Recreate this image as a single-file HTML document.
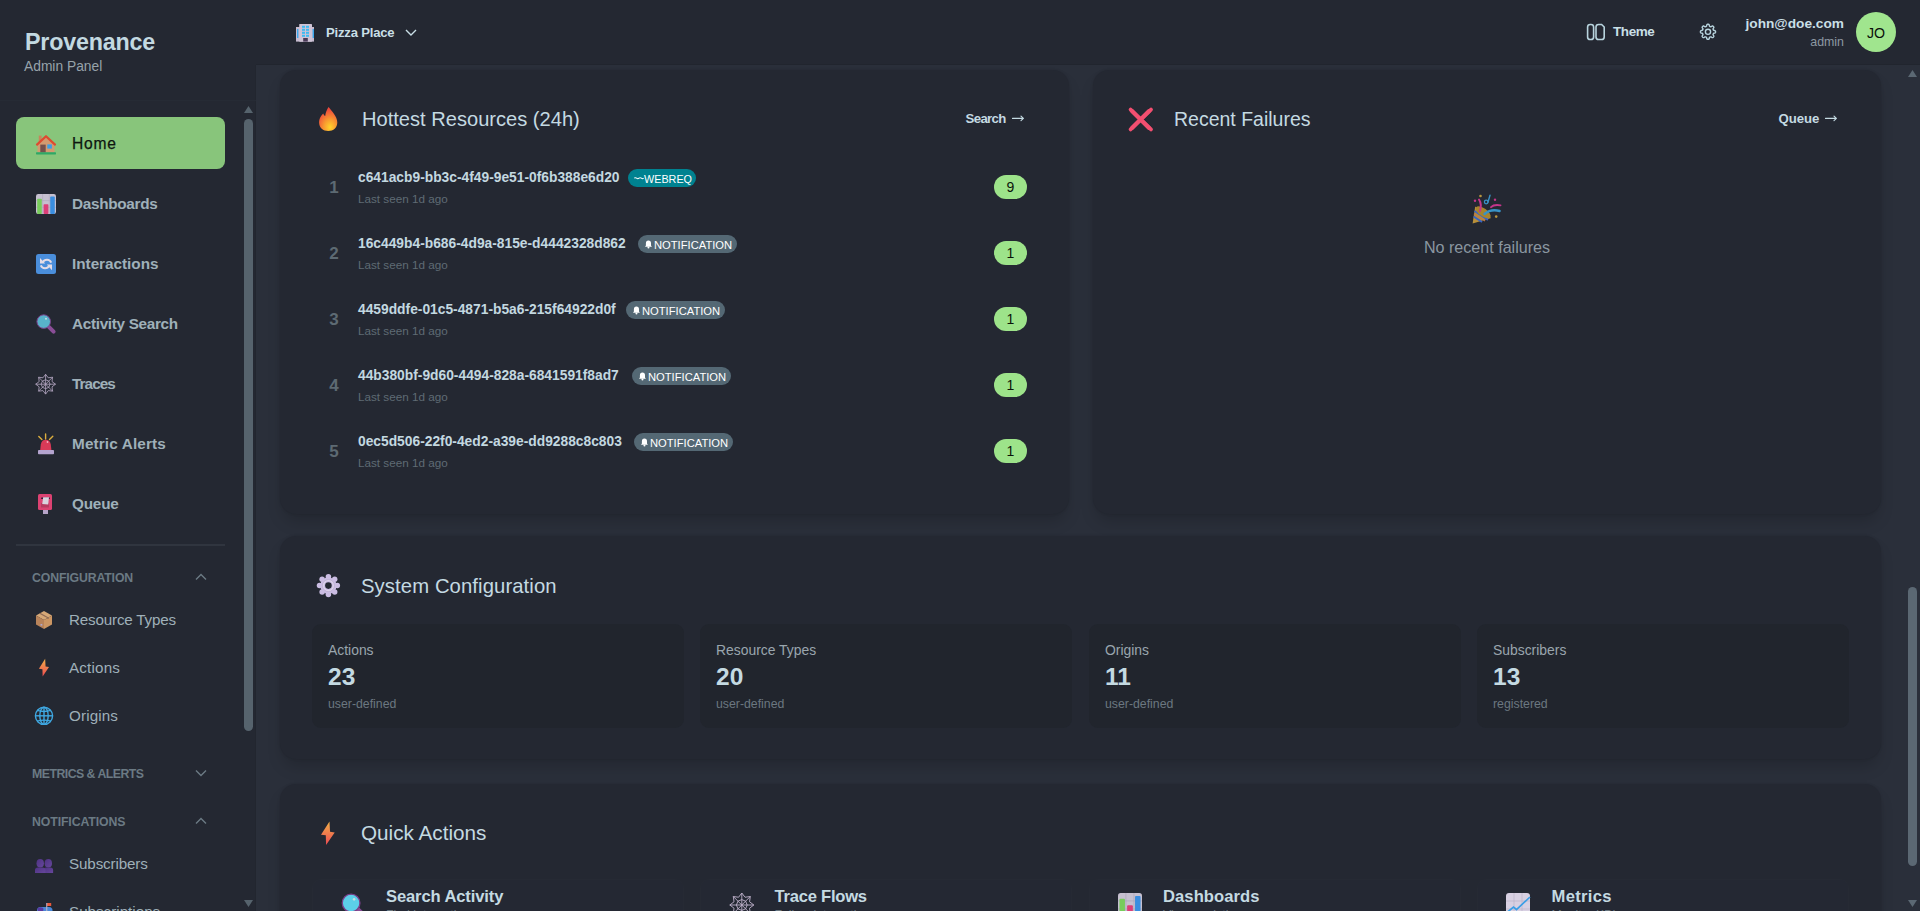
<!DOCTYPE html>
<html><head><meta charset="utf-8"><title>Provenance Admin</title>
<style>
html,body{margin:0;padding:0;}
body{width:1920px;height:911px;overflow:hidden;position:relative;background:#242832;font-family:"Liberation Sans", sans-serif;}
.t{position:absolute;white-space:nowrap;line-height:1;}
</style></head><body>
<div style="position:absolute;left:256px;top:65px;width:1664px;height:846px;background:#2a2f3a;border-radius:0px;"></div>
<div style="position:absolute;left:256px;top:64px;width:1664px;height:1px;background:#21252e;border-radius:0px;"></div>
<div style="position:absolute;left:255px;top:65px;width:1px;height:846px;background:#22262f;border-radius:0px;"></div>
<div style="position:absolute;left:0px;top:100px;width:256px;height:1px;background:#262b35;border-radius:0px;"></div>
<div style="position:absolute;left:280px;top:70px;width:789px;height:444px;background:#242832;border-radius:16px;box-shadow:0 10px 16px -3px rgba(0,0,0,0.17), 0 0 3px rgba(0,0,0,0.12);"></div>
<div style="position:absolute;left:1093px;top:70px;width:788px;height:444px;background:#242832;border-radius:16px;box-shadow:0 10px 16px -3px rgba(0,0,0,0.17), 0 0 3px rgba(0,0,0,0.12);"></div>
<div style="position:absolute;left:280px;top:536px;width:1601px;height:223px;background:#242832;border-radius:16px;box-shadow:0 10px 16px -3px rgba(0,0,0,0.17), 0 0 3px rgba(0,0,0,0.12);"></div>
<div style="position:absolute;left:280px;top:784px;width:1601px;height:200px;background:#242832;border-radius:16px;box-shadow:0 10px 16px -3px rgba(0,0,0,0.17), 0 0 3px rgba(0,0,0,0.12);"></div>
<div style="position:absolute;left:312px;top:624px;width:372px;height:104px;background:#21252d;border-radius:9px;"></div>
<div class="t" style="left:328px;top:643.63px;font-size:13.9px;color:#9aa6ae;">Actions</div>
<div class="t" style="left:328px;top:665.26px;font-size:24.5px;color:#c4dae2;font-weight:bold;">23</div>
<div class="t" style="left:328px;top:698.29px;font-size:12.3px;color:#6b7780;">user-defined</div>
<div style="position:absolute;left:700px;top:624px;width:372px;height:104px;background:#21252d;border-radius:9px;"></div>
<div class="t" style="left:716px;top:643.63px;font-size:13.9px;color:#9aa6ae;">Resource Types</div>
<div class="t" style="left:716px;top:665.26px;font-size:24.5px;color:#c4dae2;font-weight:bold;">20</div>
<div class="t" style="left:716px;top:698.29px;font-size:12.3px;color:#6b7780;">user-defined</div>
<div style="position:absolute;left:1089px;top:624px;width:372px;height:104px;background:#21252d;border-radius:9px;"></div>
<div class="t" style="left:1105px;top:643.63px;font-size:13.9px;color:#9aa6ae;">Origins</div>
<div class="t" style="left:1105px;top:665.26px;font-size:24.5px;color:#c4dae2;font-weight:bold;">11</div>
<div class="t" style="left:1105px;top:698.29px;font-size:12.3px;color:#6b7780;">user-defined</div>
<div style="position:absolute;left:1477px;top:624px;width:372px;height:104px;background:#21252d;border-radius:9px;"></div>
<div class="t" style="left:1493px;top:643.63px;font-size:13.9px;color:#9aa6ae;">Subscribers</div>
<div class="t" style="left:1493px;top:665.26px;font-size:24.5px;color:#c4dae2;font-weight:bold;">13</div>
<div class="t" style="left:1493px;top:698.29px;font-size:12.3px;color:#6b7780;">registered</div>
<div class="t" style="left:25px;top:31.28px;font-size:23.3px;color:#c3d9e1;font-weight:bold;letter-spacing:-0.203px;">Provenance</div>
<div class="t" style="left:24px;top:60.32px;font-size:13.8px;color:#97a3ab;">Admin Panel</div>
<div style="position:absolute;left:16px;top:117px;width:209px;height:52px;background:#88c57b;border-radius:8px;"></div>
<div class="t" style="left:72px;top:135.79px;font-size:15.6px;color:#0e1610;letter-spacing:0.792px;-webkit-text-stroke:0.25px #0e1610;">Home</div>
<div class="t" style="left:72px;top:196.05px;font-size:15.3px;color:#9fb0b9;font-weight:bold;letter-spacing:-0.289px;">Dashboards</div>
<div class="t" style="left:72px;top:256.05px;font-size:15.3px;color:#9fb0b9;font-weight:bold;letter-spacing:-0.018px;">Interactions</div>
<div class="t" style="left:72px;top:316.05px;font-size:15.3px;color:#9fb0b9;font-weight:bold;letter-spacing:-0.313px;">Activity Search</div>
<div class="t" style="left:72px;top:376.05px;font-size:15.3px;color:#9fb0b9;font-weight:bold;letter-spacing:-0.935px;">Traces</div>
<div class="t" style="left:72px;top:436.05px;font-size:15.3px;color:#9fb0b9;font-weight:bold;letter-spacing:0.137px;">Metric Alerts</div>
<div class="t" style="left:72px;top:496.05px;font-size:15.3px;color:#9fb0b9;font-weight:bold;letter-spacing:-0.198px;">Queue</div>
<div style="position:absolute;left:16px;top:544px;width:209px;height:2px;background:#30353f;border-radius:0px;"></div>
<div class="t" style="left:32px;top:571.59px;font-size:12.3px;color:#6b7a84;font-weight:bold;letter-spacing:-0.145px;">CONFIGURATION</div>
<svg style="position:absolute;left:195px;top:573px" width="12" height="8" viewBox="0 0 12 8"><path d="M1 6.5 L6 1.5 L11 6.5" stroke="#6b7a84" stroke-width="1.4" fill="none"/></svg>
<div class="t" style="left:32px;top:767.59px;font-size:12.3px;color:#6b7a84;font-weight:bold;letter-spacing:-0.516px;">METRICS &amp; ALERTS</div>
<svg style="position:absolute;left:195px;top:769px" width="12" height="8" viewBox="0 0 12 8"><path d="M1 1.5 L6 6.5 L11 1.5" stroke="#6b7a84" stroke-width="1.4" fill="none"/></svg>
<div class="t" style="left:32px;top:815.59px;font-size:12.3px;color:#6b7a84;font-weight:bold;letter-spacing:-0.102px;">NOTIFICATIONS</div>
<svg style="position:absolute;left:195px;top:817px" width="12" height="8" viewBox="0 0 12 8"><path d="M1 6.5 L6 1.5 L11 6.5" stroke="#6b7a84" stroke-width="1.4" fill="none"/></svg>
<div class="t" style="left:69px;top:612.13px;font-size:15.2px;color:#9fb0b9;letter-spacing:-0.18px;">Resource Types</div>
<div class="t" style="left:69px;top:660.13px;font-size:15.2px;color:#9fb0b9;letter-spacing:0.182px;">Actions</div>
<div class="t" style="left:69px;top:708.13px;font-size:15.2px;color:#9fb0b9;letter-spacing:0.131px;">Origins</div>
<div class="t" style="left:69px;top:856.13px;font-size:15.2px;color:#9fb0b9;letter-spacing:-0.129px;">Subscribers</div>
<div class="t" style="left:69px;top:904.13px;font-size:15.2px;color:#9fb0b9;">Subscriptions</div>
<svg style="position:absolute;left:243px;top:105px" width="11" height="9" viewBox="0 0 11 9"><path d="M1 8 L5.5 1 L10 8 Z" fill="#56636d"/></svg>
<div style="position:absolute;left:244px;top:119px;width:9px;height:612px;background:#56636d;border-radius:5px;"></div>
<svg style="position:absolute;left:243px;top:899px" width="11" height="9" viewBox="0 0 11 9"><path d="M1 1 L5.5 8 L10 1 Z" fill="#56636d"/></svg>
<svg style="position:absolute;left:1907px;top:69px" width="11" height="9" viewBox="0 0 11 9"><path d="M1 8 L5.5 1 L10 8 Z" fill="#5b6873"/></svg>
<div style="position:absolute;left:1908px;top:587px;width:9px;height:279px;background:#5b6873;border-radius:5px;"></div>
<svg style="position:absolute;left:1907px;top:899px" width="11" height="9" viewBox="0 0 11 9"><path d="M1 1 L5.5 8 L10 1 Z" fill="#5b6873"/></svg>
<div class="t" style="left:326px;top:25.91px;font-size:13.1px;color:#c9dfe6;font-weight:bold;letter-spacing:-0.202px;">Pizza Place</div>
<svg style="position:absolute;left:405px;top:29px" width="12" height="7" viewBox="0 0 12 7"><path d="M1 1 L6 6 L11 1" stroke="#c9dfe6" stroke-width="1.4" fill="none"/></svg>
<div class="t" style="left:1613px;top:25.27px;font-size:13.5px;color:#c9dfe6;font-weight:bold;letter-spacing:-0.426px;">Theme</div>
<div class="t" style="right:76px;top:17.10px;font-size:13.7px;color:#c9dfe6;font-weight:bold;">john@doe.com</div>
<div class="t" style="right:76px;top:36.00px;font-size:12.4px;color:#8d99a2;">admin</div>
<div style="position:absolute;left:1856px;top:12px;width:40px;height:40px;background:#a0e58e;border-radius:20px;"></div>
<div class="t" style="left:1876px;transform:translateX(-50%);top:25.58px;font-size:14.2px;color:#0b0f0b;">JO</div>
<div class="t" style="left:362px;top:108.99px;font-size:20.1px;color:#c4dae2;">Hottest Resources (24h)</div>
<div class="t" style="left:965.5px;top:111.83px;font-size:13.2px;color:#c4dae2;font-weight:bold;letter-spacing:-0.626px;">Search</div>
<svg style="position:absolute;left:1011px;top:114px" width="14" height="9" viewBox="0 0 14 9"><path d="M1.5 4.4 H12.2 M10 2.2 L12.4 4.4 L10 6.6" stroke="#c4dae2" stroke-width="1.15" fill="none" stroke-linecap="round" stroke-linejoin="round"/></svg>
<div class="t" style="left:334px;transform:translateX(-50%);top:179.11px;font-size:17px;color:#5d6a73;font-weight:bold;">1</div>
<div class="t" style="left:358px;top:171.32px;font-size:13.8px;color:#c3d8e0;font-weight:bold;">c641acb9-bb3c-4f49-9e51-0f6b388e6d20</div>
<div class="t" style="left:358px;top:192.80px;font-size:11.7px;color:#5f6b74;">Last seen 1d ago</div>
<div style="position:absolute;left:628px;top:169px;width:68px;height:18px;background:#008290;border-radius:9px;"></div>
<div class="t" style="left:644px;top:173.86px;font-size:10.8px;color:#ffffff;">WEBREQ</div>
<div style="position:absolute;left:994px;top:175px;width:33px;height:24px;background:#9de38a;border-radius:12px;"></div>
<div class="t" style="left:1010.5px;transform:translateX(-50%);top:180.15px;font-size:14px;color:#0b140b;">9</div>
<div class="t" style="left:334px;transform:translateX(-50%);top:245.11px;font-size:17px;color:#5d6a73;font-weight:bold;">2</div>
<div class="t" style="left:358px;top:237.32px;font-size:13.8px;color:#c3d8e0;font-weight:bold;">16c449b4-b686-4d9a-815e-d4442328d862</div>
<div class="t" style="left:358px;top:258.80px;font-size:11.7px;color:#5f6b74;">Last seen 1d ago</div>
<div style="position:absolute;left:638px;top:235px;width:99px;height:18px;background:#546874;border-radius:9px;"></div>
<div class="t" style="left:654px;top:239.52px;font-size:11.2px;color:#ffffff;">NOTIFICATION</div>
<div style="position:absolute;left:994px;top:241px;width:33px;height:24px;background:#9de38a;border-radius:12px;"></div>
<div class="t" style="left:1010.5px;transform:translateX(-50%);top:246.15px;font-size:14px;color:#0b140b;">1</div>
<div class="t" style="left:334px;transform:translateX(-50%);top:311.11px;font-size:17px;color:#5d6a73;font-weight:bold;">3</div>
<div class="t" style="left:358px;top:303.32px;font-size:13.8px;color:#c3d8e0;font-weight:bold;">4459ddfe-01c5-4871-b5a6-215f64922d0f</div>
<div class="t" style="left:358px;top:324.80px;font-size:11.7px;color:#5f6b74;">Last seen 1d ago</div>
<div style="position:absolute;left:626px;top:301px;width:99px;height:18px;background:#546874;border-radius:9px;"></div>
<div class="t" style="left:642px;top:305.52px;font-size:11.2px;color:#ffffff;">NOTIFICATION</div>
<div style="position:absolute;left:994px;top:307px;width:33px;height:24px;background:#9de38a;border-radius:12px;"></div>
<div class="t" style="left:1010.5px;transform:translateX(-50%);top:312.15px;font-size:14px;color:#0b140b;">1</div>
<div class="t" style="left:334px;transform:translateX(-50%);top:377.11px;font-size:17px;color:#5d6a73;font-weight:bold;">4</div>
<div class="t" style="left:358px;top:369.32px;font-size:13.8px;color:#c3d8e0;font-weight:bold;">44b380bf-9d60-4494-828a-6841591f8ad7</div>
<div class="t" style="left:358px;top:390.80px;font-size:11.7px;color:#5f6b74;">Last seen 1d ago</div>
<div style="position:absolute;left:632px;top:367px;width:99px;height:18px;background:#546874;border-radius:9px;"></div>
<div class="t" style="left:648px;top:371.52px;font-size:11.2px;color:#ffffff;">NOTIFICATION</div>
<div style="position:absolute;left:994px;top:373px;width:33px;height:24px;background:#9de38a;border-radius:12px;"></div>
<div class="t" style="left:1010.5px;transform:translateX(-50%);top:378.15px;font-size:14px;color:#0b140b;">1</div>
<div class="t" style="left:334px;transform:translateX(-50%);top:443.11px;font-size:17px;color:#5d6a73;font-weight:bold;">5</div>
<div class="t" style="left:358px;top:435.32px;font-size:13.8px;color:#c3d8e0;font-weight:bold;">0ec5d506-22f0-4ed2-a39e-dd9288c8c803</div>
<div class="t" style="left:358px;top:456.80px;font-size:11.7px;color:#5f6b74;">Last seen 1d ago</div>
<div style="position:absolute;left:634px;top:433px;width:99px;height:18px;background:#546874;border-radius:9px;"></div>
<div class="t" style="left:650px;top:437.52px;font-size:11.2px;color:#ffffff;">NOTIFICATION</div>
<div style="position:absolute;left:994px;top:439px;width:33px;height:24px;background:#9de38a;border-radius:12px;"></div>
<div class="t" style="left:1010.5px;transform:translateX(-50%);top:444.15px;font-size:14px;color:#0b140b;">1</div>
<svg style="position:absolute;left:1128px;top:107px" width="25" height="25" viewBox="0 0 25 25"><path d="M4 4 L21 21 M21 4 L4 21" stroke="#f4506f" stroke-width="4" stroke-linecap="round"/></svg>
<div class="t" style="left:1174px;top:110.49px;font-size:19.5px;color:#c4dae2;">Recent Failures</div>
<div class="t" style="left:1778.6px;top:111.83px;font-size:13.2px;color:#c4dae2;font-weight:bold;letter-spacing:-0.101px;">Queue</div>
<svg style="position:absolute;left:1824px;top:114px" width="14" height="9" viewBox="0 0 14 9"><path d="M1.5 4.4 H12.2 M10 2.2 L12.4 4.4 L10 6.6" stroke="#c4dae2" stroke-width="1.15" fill="none" stroke-linecap="round" stroke-linejoin="round"/></svg>
<div class="t" style="left:1487px;transform:translateX(-50%);top:238.77px;font-size:16.1px;color:#8a96a0;">No recent failures</div>
<div class="t" style="left:361px;top:575.82px;font-size:20.3px;color:#c4dae2;letter-spacing:0.089px;">System Configuration</div>
<div style="position:absolute;left:312px;top:879px;width:372px;height:80px;background:#242833;border-radius:9px;box-sizing:border-box;border:1px solid #262a34;"></div>
<div style="position:absolute;left:700px;top:879px;width:372px;height:80px;background:#242833;border-radius:9px;box-sizing:border-box;border:1px solid #262a34;"></div>
<div style="position:absolute;left:1089px;top:879px;width:372px;height:80px;background:#242833;border-radius:9px;box-sizing:border-box;border:1px solid #262a34;"></div>
<div style="position:absolute;left:1477px;top:879px;width:372px;height:80px;background:#242833;border-radius:9px;box-sizing:border-box;border:1px solid #262a34;"></div>
<div class="t" style="left:361px;top:823.48px;font-size:20.7px;color:#c4dae2;">Quick Actions</div>
<div class="t" style="left:386px;top:888.95px;font-size:16.6px;color:#c4dae2;font-weight:bold;letter-spacing:-0.134px;">Search Activity</div>
<div class="t" style="left:386px;top:908.59px;font-size:12.3px;color:#6b7780;">Find interactions</div>
<div class="t" style="left:774.5px;top:888.95px;font-size:16.6px;color:#c4dae2;font-weight:bold;letter-spacing:-0.246px;">Trace Flows</div>
<div class="t" style="left:774.5px;top:908.59px;font-size:12.3px;color:#6b7780;">Follow interactions</div>
<div class="t" style="left:1163px;top:888.95px;font-size:16.6px;color:#c4dae2;font-weight:bold;letter-spacing:0.07px;">Dashboards</div>
<div class="t" style="left:1163px;top:908.59px;font-size:12.3px;color:#6b7780;">View analytics</div>
<div class="t" style="left:1551.5px;top:888.95px;font-size:16.6px;color:#c4dae2;font-weight:bold;letter-spacing:0.321px;">Metrics</div>
<div class="t" style="left:1551.5px;top:908.59px;font-size:12.3px;color:#6b7780;">Monitor KPIs</div>
<svg style="position:absolute;left:0;top:0" width="1920" height="911" viewBox="0 0 1920 911"><g transform="translate(36,135)"><rect x="2.8" y="0.6" width="2.8" height="7" fill="#c8845a"/><polygon points="1.5,9.8 10,1.8 18.5,9.8 18.5,17.5 1.5,17.5" fill="#d39a70"/><path d="M1 9.6 L10 1.2 L19 9.6" stroke="#de4a30" stroke-width="2.2" fill="none" stroke-linecap="round" stroke-linejoin="round"/><rect x="4.3" y="9.6" width="5.4" height="7.9" fill="#74504c"/><rect x="11.3" y="9.4" width="4.6" height="4.2" fill="#3a9ee6"/><rect x="0" y="17.2" width="20" height="2.2" rx="0.6" fill="#2ea866"/></g><g transform="translate(36,194) scale(1.0)"><rect x="0" y="0" width="20" height="20" rx="2.2" fill="#c6c0d0"/><path d="M6.6 0 V20 M13.3 0 V20 M0 6.6 H20 M0 13.3 H20" stroke="#aaa3b8" stroke-width="0.5"/><rect x="1.2" y="4.8" width="4.6" height="15.2" rx="0.8" fill="#78cc5c"/><rect x="7.6" y="10.2" width="4.8" height="9.8" rx="0.8" fill="#dc3f78"/><rect x="14.2" y="2.6" width="4.6" height="17.4" rx="0.8" fill="#3a8ee0"/></g><g transform="translate(36,254)"><rect x="0" y="0" width="20" height="20" rx="2.5" fill="#4a8edb"/><path d="M6.8 8.4 A4.6 4.6 0 0 1 15.2 8.6" stroke="#e6dde6" stroke-width="2" fill="none"/><polygon points="4,4 4,9.4 9.2,9.4" fill="#e6dde6"/><path d="M13.2 11.6 A4.6 4.6 0 0 1 4.8 11.4" stroke="#e6dde6" stroke-width="2" fill="none"/><polygon points="16,16.2 16,10.6 10.8,10.6" fill="#e6dde6"/></g><g transform="translate(34,312) scale(1.0)"><line x1="14.6" y1="14.6" x2="19.6" y2="19.6" stroke="#8a4e97" stroke-width="4" stroke-linecap="round"/><circle cx="9.7" cy="9.6" r="6.8" fill="#58b2ca" stroke="#7a3f8a" stroke-width="1"/><circle cx="12" cy="6.8" r="1" fill="#c4dce4"/></g><line x1="45.6" y1="384.2" x2="45.60" y2="374.30" stroke="#b6a8c4" stroke-width="0.8"/><line x1="45.6" y1="384.2" x2="52.60" y2="377.20" stroke="#b6a8c4" stroke-width="0.8"/><line x1="45.6" y1="384.2" x2="55.50" y2="384.20" stroke="#b6a8c4" stroke-width="0.8"/><line x1="45.6" y1="384.2" x2="52.60" y2="391.20" stroke="#b6a8c4" stroke-width="0.8"/><line x1="45.6" y1="384.2" x2="45.60" y2="394.10" stroke="#b6a8c4" stroke-width="0.8"/><line x1="45.6" y1="384.2" x2="38.60" y2="391.20" stroke="#b6a8c4" stroke-width="0.8"/><line x1="45.6" y1="384.2" x2="35.70" y2="384.20" stroke="#b6a8c4" stroke-width="0.8"/><line x1="45.6" y1="384.2" x2="38.60" y2="377.20" stroke="#b6a8c4" stroke-width="0.8"/><polygon points="45.60,379.75 48.75,381.05 50.05,384.20 48.75,387.35 45.60,388.65 42.45,387.35 41.15,384.20 42.45,381.05" fill="none" stroke="#b6a8c4" stroke-width="0.8"/><polygon points="45.60,374.30 48.25,377.80 52.60,377.20 52.00,381.55 55.50,384.20 52.00,386.85 52.60,391.20 48.25,390.60 45.60,394.10 42.95,390.60 38.60,391.20 39.20,386.85 35.70,384.20 39.20,381.55 38.60,377.20 42.95,377.80" fill="none" stroke="#b6a8c4" stroke-width="0.8"/><g><path d="M38.8 436.4 L41.9 439.6 M52.8 436.2 L49.5 439.6 M45.6 434 L45.6 439" stroke="#dcae3e" stroke-width="1.4" stroke-linecap="round"/><path d="M40.2 450 L40.8 444.5 Q41.5 439.8 45.8 439.8 Q50.1 439.8 50.8 444.5 L51.4 450 Z" fill="#d93a58"/><circle cx="47.5" cy="442" r="0.9" fill="#f0b0c0"/><rect x="38" y="450" width="16" height="4.2" rx="0.8" fill="#b4a4cf"/></g><g><rect x="38" y="494" width="14" height="16" rx="1.5" fill="#dc4272"/><rect x="41" y="503" width="8" height="4.5" fill="#b63a60"/><rect x="41" y="497.5" width="9" height="1.6" rx="0.8" fill="#2a1a36"/><polygon points="43.2,497.2 49,497.2 48.2,504.5 42.2,504" fill="#d9d2de"/><rect x="43" y="510" width="5" height="4" fill="#b6a4c8"/></g><g><polygon points="44,611 52,615.5 44,620 36,615.5" fill="#d6a877"/><polygon points="36,615.5 44,620 44,629 36,624.5" fill="#b8835a"/><polygon points="44,620 52,615.5 52,624.5 44,629" fill="#cc9663"/><path d="M39.8 613.2 L48 617.8 L48 619" stroke="#8e6a55" stroke-width="1.3" fill="none"/><rect x="40.5" y="624" width="1.8" height="1.6" fill="#b0a8d0"/></g><defs><linearGradient id="bg1" x1="0" y1="0" x2="0" y2="1"><stop offset="0" stop-color="#f2b048"/><stop offset="1" stop-color="#ec4a52"/></linearGradient></defs><polygon points="45.16,658.70 38.90,668.67 42.43,669.19 42.64,676.60 49.00,666.93 45.57,666.40" fill="url(#bg1)"/><g stroke="#3fa8e2" stroke-width="1.4" fill="none"><circle cx="44" cy="715.8" r="8.6"/><ellipse cx="44" cy="715.8" rx="4.2" ry="8.6"/><line x1="44" y1="707.2" x2="44" y2="724.4"/><line x1="35.4" y1="715.8" x2="52.6" y2="715.8"/><path d="M37.2 710.4 Q44 712.6 50.8 710.4 M37.2 721.2 Q44 719 50.8 721.2"/></g><defs><linearGradient id="sg" x1="0" y1="0" x2="1" y2="1"><stop offset="0" stop-color="#4e3282"/><stop offset="1" stop-color="#66479c"/></linearGradient></defs><g fill="url(#sg)"><ellipse cx="48.3" cy="863.2" rx="3.7" ry="4.3"/><path d="M43.4 873 L43.4 870.2 Q43.4 867.6 46.2 867.6 L50.4 867.6 Q53.1 867.6 53.1 870.2 L53.1 873 Z"/><ellipse cx="40.2" cy="863.2" rx="3.7" ry="4.3"/><path d="M35 873 L35 870.2 Q35 867.6 37.8 867.6 L42.6 867.6 Q45.4 867.6 45.4 870.2 L45.4 873 Z"/></g><g><rect x="47" y="903" width="4.2" height="3" fill="#e8583a"/><rect x="37" y="907" width="15.5" height="8" rx="3.5" fill="#4a88d6"/><ellipse cx="40.5" cy="909.5" rx="3" ry="2.2" fill="#5a3aa0"/><rect x="46.2" y="903" width="1.1" height="9" fill="#b8b0c8"/></g><g><rect x="296" y="27" width="18" height="14.6" fill="#c6bbcf"/><rect x="299.2" y="24" width="12.8" height="17.7" rx="0.6" fill="#cfc4d6"/><rect x="297" y="29" width="1.4" height="9" fill="#3aa8ec"/><rect x="312.6" y="29" width="1.4" height="9" fill="#3aa8ec"/><rect x="302" y="25.8" width="3" height="2" fill="#3cbaf2"/><rect x="302" y="28.8" width="3" height="2" fill="#3cbaf2"/><rect x="302" y="31.8" width="3" height="2" fill="#3cbaf2"/><rect x="302" y="34.8" width="3" height="2" fill="#3cbaf2"/><rect x="306" y="25.8" width="3" height="2" fill="#3cbaf2"/><rect x="306" y="28.8" width="3" height="2" fill="#3cbaf2"/><rect x="306" y="31.8" width="3" height="2" fill="#3cbaf2"/><rect x="306" y="34.8" width="3" height="2" fill="#3cbaf2"/><rect x="303.2" y="38" width="4.6" height="3.6" fill="#4a3a58"/></g><g stroke="#b8d4de" stroke-width="1.6" fill="none"><rect x="1587.6" y="24.5" width="6" height="15" rx="2.6"/><path d="M1598.6 24.5 H1601.6 L1604.2 27 V36.9 Q1604.2 39.5 1601.6 39.5 H1598.6 Q1596 39.5 1596 36.9 V27.1 Q1596 24.5 1598.6 24.5 Z"/></g><path d="M1715.55 31.80 L1715.54 32.10 L1715.50 32.39 L1715.39 32.67 L1715.09 32.92 L1714.47 33.09 L1713.86 33.21 L1713.55 33.36 L1713.40 33.56 L1713.31 33.76 L1713.22 33.96 L1713.14 34.17 L1713.06 34.38 L1713.03 34.62 L1713.14 34.95 L1713.49 35.47 L1713.81 36.02 L1713.84 36.40 L1713.72 36.68 L1713.54 36.92 L1713.34 37.14 L1713.12 37.34 L1712.88 37.52 L1712.60 37.64 L1712.22 37.61 L1711.67 37.29 L1711.15 36.94 L1710.82 36.83 L1710.58 36.86 L1710.37 36.94 L1710.16 37.02 L1709.96 37.11 L1709.76 37.20 L1709.56 37.35 L1709.41 37.66 L1709.29 38.27 L1709.12 38.89 L1708.87 39.19 L1708.59 39.30 L1708.30 39.34 L1708.00 39.35 L1707.70 39.34 L1707.41 39.30 L1707.13 39.19 L1706.88 38.89 L1706.71 38.27 L1706.59 37.66 L1706.44 37.35 L1706.24 37.20 L1706.04 37.11 L1705.84 37.02 L1705.63 36.94 L1705.42 36.86 L1705.18 36.83 L1704.85 36.94 L1704.33 37.29 L1703.78 37.61 L1703.40 37.64 L1703.12 37.52 L1702.88 37.34 L1702.66 37.14 L1702.46 36.92 L1702.28 36.68 L1702.16 36.40 L1702.19 36.02 L1702.51 35.47 L1702.86 34.95 L1702.97 34.62 L1702.94 34.38 L1702.86 34.17 L1702.78 33.96 L1702.69 33.76 L1702.60 33.56 L1702.45 33.36 L1702.14 33.21 L1701.53 33.09 L1700.91 32.92 L1700.61 32.67 L1700.50 32.39 L1700.46 32.10 L1700.45 31.80 L1700.46 31.50 L1700.50 31.21 L1700.61 30.93 L1700.91 30.68 L1701.53 30.51 L1702.14 30.39 L1702.45 30.24 L1702.60 30.04 L1702.69 29.84 L1702.78 29.64 L1702.86 29.43 L1702.94 29.22 L1702.97 28.98 L1702.86 28.65 L1702.51 28.13 L1702.19 27.58 L1702.16 27.20 L1702.28 26.92 L1702.46 26.68 L1702.66 26.46 L1702.88 26.26 L1703.12 26.08 L1703.40 25.96 L1703.78 25.99 L1704.33 26.31 L1704.85 26.66 L1705.18 26.77 L1705.42 26.74 L1705.63 26.66 L1705.84 26.58 L1706.04 26.49 L1706.24 26.40 L1706.44 26.25 L1706.59 25.94 L1706.71 25.33 L1706.88 24.71 L1707.13 24.41 L1707.41 24.30 L1707.70 24.26 L1708.00 24.25 L1708.30 24.26 L1708.59 24.30 L1708.87 24.41 L1709.12 24.71 L1709.29 25.33 L1709.41 25.94 L1709.56 26.25 L1709.76 26.40 L1709.96 26.49 L1710.16 26.58 L1710.37 26.66 L1710.58 26.74 L1710.82 26.77 L1711.15 26.66 L1711.67 26.31 L1712.22 25.99 L1712.60 25.96 L1712.88 26.08 L1713.12 26.26 L1713.34 26.46 L1713.54 26.68 L1713.72 26.92 L1713.84 27.20 L1713.81 27.58 L1713.49 28.13 L1713.14 28.65 L1713.03 28.98 L1713.06 29.22 L1713.14 29.43 L1713.22 29.64 L1713.31 29.84 L1713.40 30.04 L1713.55 30.24 L1713.86 30.39 L1714.47 30.51 L1715.09 30.68 L1715.39 30.93 L1715.50 31.21 L1715.54 31.50 Z" stroke="#b8d4de" stroke-width="1.4" fill="none" stroke-linejoin="round"/><circle cx="1708" cy="31.8" r="2.6" stroke="#b8d4de" stroke-width="1.4" fill="none"/><defs><radialGradient id="fg" cx="0.6" cy="0.85" r="0.75"><stop offset="0" stop-color="#ffd42c"/><stop offset="0.45" stop-color="#f89a30"/><stop offset="1" stop-color="#ee4a3c"/></radialGradient></defs><path d="M328.6 107 C331.5 111, 337.3 116.5, 337.3 122.5 C337.3 127.5, 333.5 131, 328.3 131 C323 131, 319.1 127.5, 319.1 122.5 C319.1 118, 321.5 115.5, 323.2 113.5 C323.8 115, 324.6 115.8, 325.2 116 C325.6 112.5, 326.8 109.5, 328.6 107 Z" fill="url(#fg)"/><path d="M1130.6 109.6 L1151 129.4 M1151 109.6 L1130.6 129.4" stroke="#f24f70" stroke-width="3.8" stroke-linecap="round"/><g><polygon points="1472.6,223.6 1475.2,206.5 1491.2,218" fill="#b8903a"/><path d="M1474.5 211 L1488 219.8 M1473.6 216.5 L1482 222" stroke="#3a64c4" stroke-width="2"/><path d="M1474 213.8 L1485 221" stroke="#c07848" stroke-width="1.3"/><ellipse cx="1483.2" cy="212.3" rx="8.6" ry="4" transform="rotate(35 1483.2 212.3)" fill="#a8842e"/><path d="M1479 199.5 Q1482 204 1480 211" stroke="#c4368a" stroke-width="2" fill="none" stroke-linecap="round"/><circle cx="1486.2" cy="202" r="1.8" stroke="#3892c6" stroke-width="1.3" fill="none"/><path d="M1488 202 L1490 195.2" stroke="#3892c6" stroke-width="1.4" stroke-linecap="round"/><path d="M1491 207.2 Q1494 204.2 1500.5 205.4" stroke="#c4368a" stroke-width="1.9" fill="none" stroke-linecap="round"/><path d="M1484.5 214 Q1491 208.5 1499.6 211" stroke="#3892c6" stroke-width="2.4" fill="none" stroke-linecap="round"/><circle cx="1480.5" cy="196" r="1.3" fill="#b8963e"/><circle cx="1475" cy="200.8" r="1.2" fill="#c4368a"/><circle cx="1495" cy="199.8" r="1.2" fill="#c4368a"/><circle cx="1496.2" cy="216.6" r="1.3" fill="#b8963e"/></g><g fill="#cbbde3"><circle cx="328.4" cy="585.6" r="8.2"/><circle cx="328.40" cy="576.70" r="2.75"/><circle cx="334.69" cy="579.31" r="2.75"/><circle cx="337.30" cy="585.60" r="2.75"/><circle cx="334.69" cy="591.89" r="2.75"/><circle cx="328.40" cy="594.50" r="2.75"/><circle cx="322.11" cy="591.89" r="2.75"/><circle cx="319.50" cy="585.60" r="2.75"/><circle cx="322.11" cy="579.31" r="2.75"/></g><circle cx="328.4" cy="585.6" r="5.2" fill="none" stroke="#ddd3ec" stroke-width="1.4"/><circle cx="328.4" cy="585.6" r="6" fill="none" stroke="#b9aacd" stroke-width="0.6"/><circle cx="328.4" cy="585.6" r="3.3" fill="#242832"/><defs><linearGradient id="bg2" x1="0" y1="0" x2="0" y2="1"><stop offset="0" stop-color="#f2b048"/><stop offset="1" stop-color="#ec4a52"/></linearGradient></defs><polygon points="329.49,821.60 321.00,834.69 325.80,835.37 326.07,845.10 334.70,832.41 330.04,831.71" fill="url(#bg2)"/><g transform="translate(338.5,890.5) scale(1.3)"><line x1="14.6" y1="14.6" x2="19.6" y2="19.6" stroke="#8a4e97" stroke-width="4" stroke-linecap="round"/><circle cx="9.7" cy="9.6" r="6.8" fill="#5ccfe9" stroke="#7a3f8a" stroke-width="1"/><circle cx="12" cy="6.8" r="1" fill="#c4dce4"/></g><line x1="741.8" y1="905" x2="741.80" y2="893.00" stroke="#c0b2cc" stroke-width="0.9"/><line x1="741.8" y1="905" x2="750.29" y2="896.51" stroke="#c0b2cc" stroke-width="0.9"/><line x1="741.8" y1="905" x2="753.80" y2="905.00" stroke="#c0b2cc" stroke-width="0.9"/><line x1="741.8" y1="905" x2="750.29" y2="913.49" stroke="#c0b2cc" stroke-width="0.9"/><line x1="741.8" y1="905" x2="741.80" y2="917.00" stroke="#c0b2cc" stroke-width="0.9"/><line x1="741.8" y1="905" x2="733.31" y2="913.49" stroke="#c0b2cc" stroke-width="0.9"/><line x1="741.8" y1="905" x2="729.80" y2="905.00" stroke="#c0b2cc" stroke-width="0.9"/><line x1="741.8" y1="905" x2="733.31" y2="896.51" stroke="#c0b2cc" stroke-width="0.9"/><polygon points="741.80,899.60 745.62,901.18 747.20,905.00 745.62,908.82 741.80,910.40 737.98,908.82 736.40,905.00 737.98,901.18" fill="none" stroke="#c0b2cc" stroke-width="0.9"/><polygon points="741.80,893.00 745.01,897.24 750.29,896.51 749.56,901.79 753.80,905.00 749.56,908.21 750.29,913.49 745.01,912.76 741.80,917.00 738.59,912.76 733.31,913.49 734.04,908.21 729.80,905.00 734.04,901.79 733.31,896.51 738.59,897.24" fill="none" stroke="#c0b2cc" stroke-width="0.9"/><g transform="translate(1118,893) scale(1.2)"><rect x="0" y="0" width="20" height="20" rx="2.2" fill="#c6c0d0"/><path d="M6.6 0 V20 M13.3 0 V20 M0 6.6 H20 M0 13.3 H20" stroke="#aaa3b8" stroke-width="0.5"/><rect x="1.2" y="4.8" width="4.6" height="15.2" rx="0.8" fill="#78cc5c"/><rect x="7.6" y="10.2" width="4.8" height="9.8" rx="0.8" fill="#dc3f78"/><rect x="14.2" y="2.6" width="4.6" height="17.4" rx="0.8" fill="#3a8ee0"/></g><g transform="translate(1506,893)"><rect x="0" y="0" width="24" height="24" rx="3" fill="#d8d0e2"/><path d="M8 0 V24 M16 0 V24 M0 8 H24 M0 16 H24" stroke="#b8afc6" stroke-width="0.6"/><path d="M1.5 19 L7.5 14 L10.5 16.5 L24 4" stroke="#3a9ee6" stroke-width="1.7" fill="none"/></g><path d="M634.2 178.2 q1.2 -1 2.4 0 t2.4 0 t2.4 0 t2.2 0" stroke="#ffffff" stroke-width="1.1" fill="none"/><path d="M645.00 246.80 L645.90 245.40 L645.90 243.40 Q645.90 240.60 648.45 240.60 Q651.00 240.60 651.00 243.40 L651.00 245.40 L651.90 246.80 Z" fill="#ffffff"/><circle cx="648.45" cy="247.60" r="1" fill="#ffffff"/><path d="M633.00 312.80 L633.90 311.40 L633.90 309.40 Q633.90 306.60 636.45 306.60 Q639.00 306.60 639.00 309.40 L639.00 311.40 L639.90 312.80 Z" fill="#ffffff"/><circle cx="636.45" cy="313.60" r="1" fill="#ffffff"/><path d="M639.00 378.80 L639.90 377.40 L639.90 375.40 Q639.90 372.60 642.45 372.60 Q645.00 372.60 645.00 375.40 L645.00 377.40 L645.90 378.80 Z" fill="#ffffff"/><circle cx="642.45" cy="379.60" r="1" fill="#ffffff"/><path d="M641.00 444.80 L641.90 443.40 L641.90 441.40 Q641.90 438.60 644.45 438.60 Q647.00 438.60 647.00 441.40 L647.00 443.40 L647.90 444.80 Z" fill="#ffffff"/><circle cx="644.45" cy="445.60" r="1" fill="#ffffff"/></svg>
</body></html>
